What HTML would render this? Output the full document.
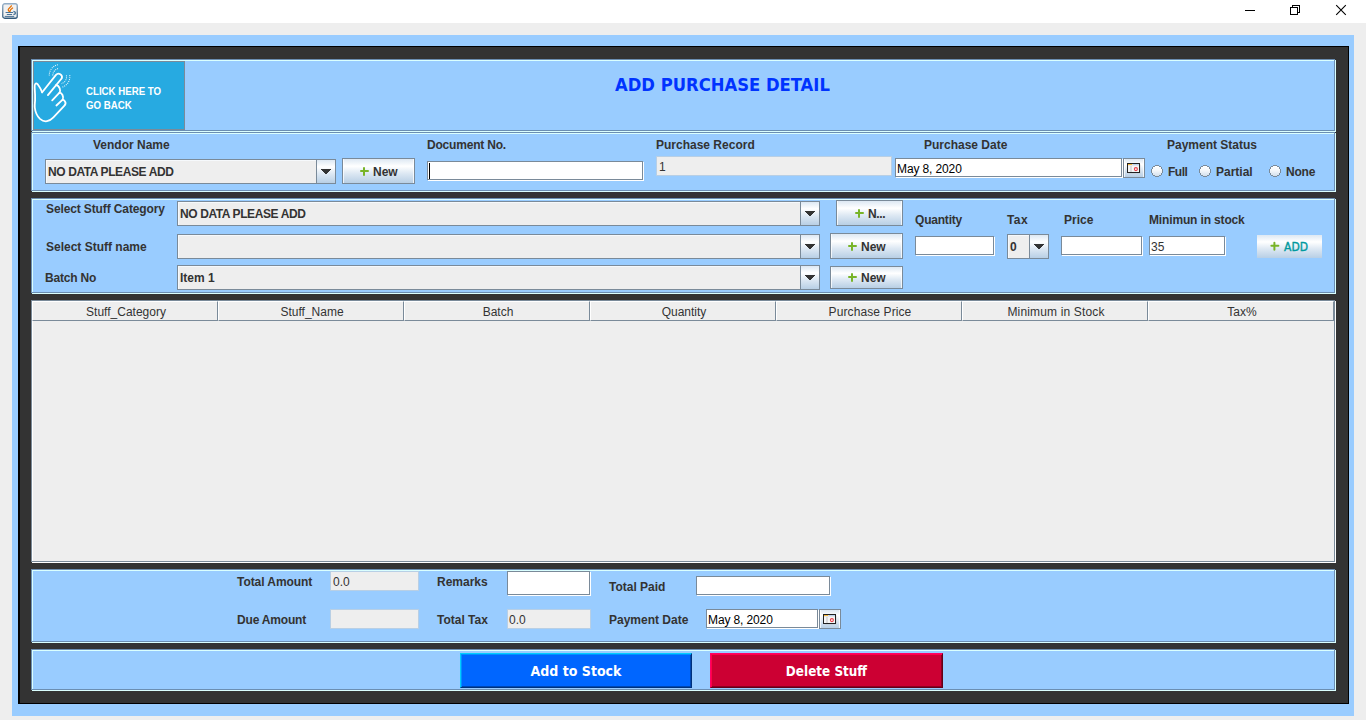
<!DOCTYPE html>
<html lang="en">
<head>
<meta charset="utf-8">
<title>Add Purchase Detail</title>
<style>
html,body{margin:0;padding:0}
body{width:1366px;height:720px;position:relative;overflow:hidden;background:#eeeeee;font-family:"Liberation Sans",sans-serif;font-size:12px;color:#333}
div,span,svg{position:absolute;box-sizing:border-box}
.t{white-space:nowrap;line-height:14px;font-size:12px;color:#333}
.b{font-weight:bold}
.k{color:#000}
.cb{letter-spacing:-0.4px}
.titlebar{left:0;top:0;width:1366px;height:23px;background:#fff}
.outer{left:12px;top:35px;width:1342px;height:681px;background:#99ccff}
.dark{left:18px;top:46px;width:1331px;height:658px;background:#333;border-style:solid;border-color:#000;border-width:1px 1px 1px 2px}
.etched{left:31px;width:1304px;background:#99ccff;border:1px solid #6b8eb2;box-shadow:inset 1px 1px 0 #daffff,1px 1px 0 #daffff}
.btn{border:1px solid #7a8a99;background:linear-gradient(to bottom,#dde8f3 0%,#ffffff 30%,#dde8f3 60%,#b8cfe5 100%);box-shadow:inset 1px 0 0 rgba(255,255,255,.75),inset -1px 0 0 rgba(255,255,255,.75)}
.combo{border:1px solid #7a8a99;background:#eeeeee;height:25px;box-shadow:inset 1px 1px 0 #f6f9fc}
.combo .arr{right:-1px;top:-1px;width:20px;height:25px;border:1px solid #7a8a99;background:linear-gradient(to bottom,#dde8f3 0%,#ffffff 30%,#dde8f3 60%,#b8cfe5 100%)}
.combo .arr svg{left:4px;top:9px}
.tf{height:19px;background:#fff;border:1px solid #7a8a99;box-shadow:1px 1px 0 #fff}
.ro{height:20px;background:#eeeeee;border:1px solid #b8cfe5}
.plus{width:9px;height:9px}
.plus:before,.plus:after{content:"";position:absolute;background:#78b428;border-radius:1px}
.plus:before{left:0;top:3px;width:9px;height:2px}
.plus:after{left:3px;top:0;width:2px;height:9px}
.radio{width:12px;height:12px}
.hd{top:0;height:20px;width:186px;border-right:1px solid #7a8a99;border-bottom:1px solid #7a8a99;border-left:1px solid #fff;border-top:1px solid #fff;background:#eeeeee;text-align:center}
.hd span{left:1px;right:-1px;top:3px;text-align:center}
.big{top:653px;height:35px;border-style:solid;border-width:1px;color:#fff;text-align:center}
.big span{left:0;right:0;top:8px;line-height:18px;font:bold 14px/18px "DejaVu Sans Condensed","DejaVu Sans","Liberation Sans",sans-serif;color:#fff;text-align:center}
</style>
</head>
<body>
<svg width="0" height="0" style="left:0;top:0">
<defs>
<linearGradient id="rg" x1="0" y1="0" x2="0" y2="1"><stop offset="0" stop-color="#ffffff"/><stop offset="0.45" stop-color="#f4f7fa"/><stop offset="1" stop-color="#d3e0ed"/></linearGradient>
<symbol id="radio" viewBox="0 0 12 12">
<path d="M4 1h4v1h2v2h1v4h-1v2h-2v1h-4v-1h-2v-2h-1v-4h1v-2h2z" fill="url(#rg)"/>
<path d="M4 0h4v1h-4z M2 1h2v1h-2z M8 1h2v1h-2z M1 2h1v2h-1z M10 2h1v2h-1z M0 4h1v4h-1z M11 4h1v4h-1z M1 8h1v2h-1z M10 8h1v2h-1z M2 10h2v1h-2z M8 10h2v1h-2z M4 11h4v1h-4z" fill="#7a8a99"/>
</symbol>
<symbol id="arrow" viewBox="0 0 10 5"><path d="M0 0h10v1h-1v1h-1v1h-1v1h-1v1h-2v-1h-1v-1h-1v-1h-1v-1h-1z" fill="#333"/></symbol>
<symbol id="cal" viewBox="0 0 14 11">
<rect x="1.5" y="1.5" width="12" height="9" fill="#b9b9b9" opacity="0.55"/>
<rect x="0.5" y="0.5" width="12" height="9" fill="#f6f6f6" stroke="#222" stroke-width="1"/>
<rect x="1" y="1" width="4" height="1" fill="#f6b93d"/><rect x="5" y="1" width="1" height="1" fill="#e9e2d0"/><rect x="6" y="1" width="6" height="1" fill="#bdd5ef"/>
<rect x="1" y="2" width="11" height="1" fill="#e4e6ea"/>
<rect x="3" y="3" width="2" height="6" fill="#dcdcdc"/>
<circle cx="8.9" cy="6.1" r="1.5" fill="#fff" stroke="#e8414b" stroke-width="1.15"/>
</symbol>
</defs>
</svg>
<!-- window title bar -->
<div class="titlebar">
<svg style="left:2px;top:3px" width="16" height="16" viewBox="0 0 16 16">
<defs><linearGradient id="jg" x1="0" y1="0" x2="0" y2="1"><stop offset="0" stop-color="#93adc6"/><stop offset="1" stop-color="#335a7c"/></linearGradient></defs>
<rect x="0.75" y="0.75" width="14.5" height="14.5" rx="2" ry="2" fill="#f1f1f1" stroke="url(#jg)" stroke-width="1.3"/>
<path d="M7.5 8.7 C5.6 7.4 6 6.2 7.4 5 C8.4 4.1 9 3.6 9.4 2.9 M8.2 8.3 C7.6 7.2 8.6 6.4 10.6 5" fill="none" stroke="#e76f00" stroke-width="1.25" stroke-linecap="round"/>
<path d="M4 9.5 H10.6 M5.2 11.5 H9.7 M3.1 13.4 H11.8" fill="none" stroke="#4a7396" stroke-width="1" stroke-linecap="round"/>
<path d="M11.4 8.5 C12.6 8.6 13.5 9.3 13.5 10 C13.5 10.8 12.6 11.4 11.4 11.7" fill="none" stroke="#4a7396" stroke-width="1.3"/>
</svg>
<svg style="left:1240px;top:0" width="126" height="23" viewBox="0 0 126 23" shape-rendering="crispEdges">
<rect x="5" y="10" width="10" height="1" fill="#000"/>
<path d="M52.5 7.5 V5.5 H59.5 V12.5 H57.5" fill="none" stroke="#000" stroke-width="1"/>
<rect x="50.5" y="7.5" width="7" height="7" fill="none" stroke="#000" stroke-width="1"/>
<path d="M96.2 5.2 L105.8 14.8 M105.8 5.2 L96.2 14.8" fill="none" stroke="#000" stroke-width="1.1" shape-rendering="geometricPrecision"/>
</svg>
</div>

<div class="outer"></div>
<div class="dark"></div>

<!-- PANEL 1 : header -->
<div class="etched" style="top:59px;height:72px"></div>
<div id="goback" style="left:33px;top:61px;width:152px;height:69px;background:#27aae1;border:1px solid #7a8a99">
<svg style="left:-1px;top:-1px" width="152" height="69" viewBox="33 61 152 69" fill="none" stroke="#fff" stroke-linecap="round" stroke-linejoin="round">
<g stroke-width="1.8">
<path d="M42.2 92.3 L56 74.9 A3.4 3.4 0 0 1 61.8 78.2 L47.9 95.1"/>
<path d="M42.2 92.3 C41 89.5 39.6 86.8 38.4 85.2 C37.4 83.6 36.2 83 35.3 83.8 C34.5 84.5 34.6 86 34.7 88 C35 92 35.2 96 35.1 100.3 C35 103 34.5 105 34.8 107.5 C35.3 112 37 116 40 118.9 C42.5 121 45 121.6 47 121.2 C49.5 120.8 51.5 119.4 53.4 117.4 L64.2 105.9 C65.6 104.4 65.9 102.7 65 101.4 C64.4 100.5 63.6 99.9 62.7 99.7"/>
<path d="M62.7 99.7 L56.4 105.5"/>
<path d="M52.2 100.3 L59.5 92.7 C60.6 92.7 61.8 93.6 62.5 95 C63.2 96.5 63.3 98.3 62.7 99.7"/>
<path d="M56 85.2 C57.6 85.4 59 86.6 59.7 88.3 C60.3 90 60.2 91.6 59.5 92.7"/>
</g>
<g stroke-width="1.1" stroke-dasharray="1 1" stroke-linecap="butt" opacity="0.9">
<path d="M49.3 75.6 A10.6 10.6 0 0 1 58.6 64.6"/>
<path d="M52.8 75.4 A7.2 7.2 0 0 1 58.8 68.4"/>
<path d="M69.7 75.2 A10.6 10.6 0 0 1 61.6 87.2"/>
<path d="M66.4 75.4 A7.2 7.2 0 0 1 61.4 83.7"/>
</g>
</svg>
<span class="t b" style="left:52px;top:22px;font-size:11px;line-height:14px;color:#fff;transform-origin:0 0;transform:scaleX(0.88)">CLICK HERE TO<br>GO BACK</span>
</div>
<span id="title" class="t" style="left:615px;top:74px;font:bold 18px/22px 'DejaVu Sans Condensed','DejaVu Sans','Liberation Sans',sans-serif;color:#0033ff;transform-origin:0 0;transform:scaleX(1.014)">ADD PURCHASE DETAIL</span>
<!-- PANEL 2 : vendor row -->
<div class="etched" style="top:132px;height:59px"></div>
<span class="t b" style="left:93px;top:138px">Vendor Name</span>
<div class="combo" style="left:45px;top:159px;width:291px">
<span class="t b cb" style="left:2px;top:5px">NO DATA PLEASE ADD</span>
<div class="arr"><svg width="10" height="5" shape-rendering="crispEdges"><use href="#arrow"/></svg></div>
</div>
<div class="btn" style="left:342px;top:158px;width:73px;height:26px">
<i class="plus" style="position:absolute;left:17px;top:8px"></i>
<span class="t b" style="left:30px;top:6px">New</span>
</div>
<span class="t b" style="left:427px;top:138px;letter-spacing:-0.2px">Document No.</span>
<div class="tf" style="left:427px;top:161px;width:216px"><i style="position:absolute;left:1px;top:1px;width:1px;height:16px;background:#000"></i></div>
<span class="t b" style="left:656px;top:138px">Purchase Record</span>
<div class="ro" style="left:656px;top:156px;width:236px"><span class="t" style="left:2px;top:3px">1</span></div>
<span class="t b" style="left:924px;top:138px">Purchase Date</span>
<div class="tf" style="left:895px;top:158px;width:227px"><span class="t k" style="left:1px;top:3px;letter-spacing:-0.12px">May 8, 2020</span></div>
<div class="btn" style="left:1123px;top:158px;width:22px;height:20px"><svg style="left:3px;top:4px" width="14" height="11"><use href="#cal"/></svg></div>
<span class="t b" style="left:1167px;top:138px">Payment Status</span>
<svg class="radio" style="left:1151px;top:165px" shape-rendering="crispEdges"><use href="#radio"/></svg>
<span class="t b" style="left:1168px;top:165px;letter-spacing:-0.5px">Full</span>
<svg class="radio" style="left:1199px;top:165px" shape-rendering="crispEdges"><use href="#radio"/></svg>
<span class="t b" style="left:1216px;top:165px">Partial</span>
<svg class="radio" style="left:1269px;top:165px" shape-rendering="crispEdges"><use href="#radio"/></svg>
<span class="t b" style="left:1286px;top:165px;letter-spacing:-0.2px">None</span>
<!-- PANEL 3 : stuff row -->
<div class="etched" style="top:198px;height:95px"></div>
<span class="t b" style="left:46px;top:202px;letter-spacing:-0.12px">Select Stuff Category</span>
<div class="combo" style="left:177px;top:201px;width:643px">
<span class="t b cb" style="left:2px;top:5px">NO DATA PLEASE ADD</span>
<div class="arr"><svg width="10" height="5" shape-rendering="crispEdges"><use href="#arrow"/></svg></div>
</div>
<div class="btn" style="left:836px;top:200px;width:67px;height:26px">
<i class="plus" style="position:absolute;left:18px;top:8px"></i>
<span class="t b" style="left:31px;top:6px;letter-spacing:-0.4px">N...</span>
</div>
<span class="t b" style="left:46px;top:240px">Select Stuff name</span>
<div class="combo" style="left:177px;top:234px;width:643px">
<div class="arr"><svg width="10" height="5" shape-rendering="crispEdges"><use href="#arrow"/></svg></div>
</div>
<div class="btn" style="left:830px;top:233px;width:73px;height:26px">
<i class="plus" style="position:absolute;left:17px;top:8px"></i>
<span class="t b" style="left:30px;top:6px">New</span>
</div>
<span class="t b" style="left:45px;top:271px;letter-spacing:-0.18px">Batch No</span>
<div class="combo" style="left:177px;top:265px;width:643px">
<span class="t b" style="left:2px;top:5px">Item 1</span>
<div class="arr"><svg width="10" height="5" shape-rendering="crispEdges"><use href="#arrow"/></svg></div>
</div>
<div class="btn" style="left:830px;top:266px;width:73px;height:23px">
<i class="plus" style="position:absolute;left:17px;top:6px"></i>
<span class="t b" style="left:30px;top:4px">New</span>
</div>
<span class="t b" style="left:915px;top:213px;letter-spacing:-0.2px">Quantity</span>
<div class="tf" style="left:915px;top:236px;width:79px"></div>
<span class="t b" style="left:1007px;top:213px;letter-spacing:0.4px">Tax</span>
<div class="combo" style="left:1007px;top:234px;width:42px">
<span class="t b" style="left:2px;top:5px">0</span>
<div class="arr"><svg width="10" height="5" shape-rendering="crispEdges"><use href="#arrow"/></svg></div>
</div>
<span class="t b" style="left:1064px;top:213px">Price</span>
<div class="tf" style="left:1061px;top:236px;width:81px"></div>
<span class="t b" style="left:1149px;top:213px;letter-spacing:-0.15px">Minimun in stock</span>
<div class="tf" style="left:1149px;top:236px;width:76px"><span class="t" style="left:1px;top:3px">35</span></div>
<div id="addbtn" style="left:1257px;top:235px;width:65px;height:23px;background:linear-gradient(to bottom,#dde8f3 0%,#ffffff 30%,#dde8f3 60%,#b8cfe5 100%)">
<i class="plus" style="position:absolute;left:14px;top:7px;transform:translate(-0.6px,-0.35px)"></i>
<span class="t" style="left:27px;top:5px;color:#00999e;font-family:'DejaVu Sans Condensed','DejaVu Sans',sans-serif;font-size:12px;-webkit-text-stroke:0.35px #00999e">ADD</span>
</div>
<!-- TABLE -->
<div id="table" style="left:31px;top:300px;width:1304px;height:262px;background:#eeeeee;border:1px solid #7a8a99;box-shadow:inset 1px 0 0 #fff,1px 1px 0 #fff">
<div class="hd" style="left:0px"><span class="t">Stuff_Category</span></div>
<div class="hd" style="left:186px"><span class="t">Stuff_Name</span></div>
<div class="hd" style="left:372px"><span class="t">Batch</span></div>
<div class="hd" style="left:558px"><span class="t">Quantity</span></div>
<div class="hd" style="left:744px"><span class="t" style="letter-spacing:0.1px">Purchase Price</span></div>
<div class="hd" style="left:930px"><span class="t" style="letter-spacing:0.15px">Minimum in Stock</span></div>
<div class="hd" style="left:1116px"><span class="t">Tax%</span></div>
</div>
<!-- PANEL 4 : totals -->
<div class="etched" style="top:569px;height:73px"></div>
<span class="t b" style="left:237px;top:575px;letter-spacing:-0.06px">Total Amount</span>
<div class="ro" style="left:330px;top:571px;width:89px"><span class="t" style="left:2px;top:3px">0.0</span></div>
<span class="t b" style="left:237px;top:613px;letter-spacing:-0.18px">Due Amount</span>
<div class="ro" style="left:330px;top:609px;width:89px"></div>
<span class="t b" style="left:437px;top:575px">Remarks</span>
<div style="left:507px;top:571px;width:83px;height:24px;background:#fff;border:1px solid #7a8a99;box-shadow:1px 1px 0 #fff"></div>
<span class="t b" style="left:437px;top:613px">Total Tax</span>
<div class="ro" style="left:507px;top:609px;width:84px"><span class="t" style="left:1px;top:3px">0.0</span></div>
<span class="t b" style="left:609px;top:580px">Total Paid</span>
<div class="tf" style="left:696px;top:576px;width:134px"></div>
<span class="t b" style="left:609px;top:613px">Payment Date</span>
<div class="tf" style="left:706px;top:609px;width:112px"><span class="t k" style="left:1px;top:3px;letter-spacing:-0.12px">May 8, 2020</span></div>
<div class="btn" style="left:819px;top:609px;width:22px;height:20px"><svg style="left:3px;top:4px" width="14" height="11"><use href="#cal"/></svg></div>
<!-- PANEL 5 : buttons -->
<div class="etched" style="top:649px;height:41px"></div>
<div class="big" style="left:460px;width:232px;background:#0066ff;border-color:#00cfff #00317c #00317c #00cfff;box-shadow:inset 1px 1px 0 #0091ff,inset -1px -1px 0 #0047b2"><span>Add to Stock</span></div>
<div class="big" style="left:710px;width:233px;background:#cc0033;border-color:#ff0066 #630018 #630018 #ff0066;box-shadow:inset 1px 1px 0 #ff0048,inset -1px -1px 0 #8e0023"><span style="transform:scaleX(0.955)">Delete Stuff</span></div>
</body>
</html>
